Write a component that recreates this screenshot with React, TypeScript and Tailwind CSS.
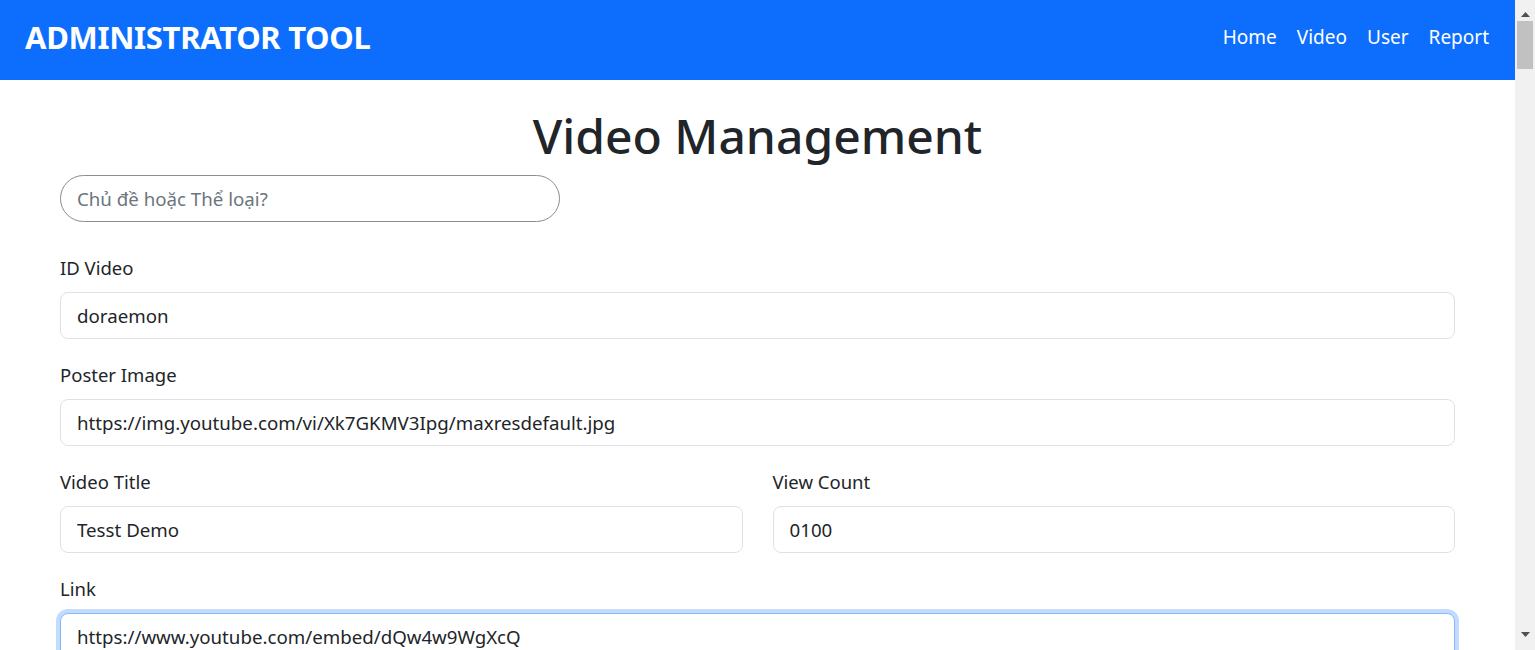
import React, { useEffect, useRef } from 'react';

const FONT = { fontFamily: '"Noto Sans", "Open Sans", "DejaVu Sans", sans-serif' };

const Field = ({ label, value, className = '' }: { label: string; value: string; className?: string }) => (
  <div className={className}>
    <label className="block text-[18.5px] leading-[30px] mb-[9px]">{label}</label>
    <input
      readOnly
      value={value}
      className="w-full h-[47px] px-4 text-[18.7px] text-[#212529] bg-white border border-[#dee2e6] rounded-lg outline-none"
    />
  </div>
);

export default function App() {
  const linkRef = useRef<HTMLInputElement>(null);

  useEffect(() => {
    const el = linkRef.current;
    if (el) {
      el.focus({ preventScroll: true });
      el.setSelectionRange(el.value.length, el.value.length);
    }
  }, []);

  return (
    <div style={FONT} className="h-screen flex bg-white text-[#212529] overflow-hidden">
      <div className="flex-1 min-w-0">
        {/* Navbar */}
        <nav className="h-20 bg-[#0d6efd] flex items-center justify-between pl-[25px] pr-[26px] pb-[5px]">
          <a className="text-white font-bold text-[31px] tracking-[-0.01em]">ADMINISTRATOR TOOL</a>
          <ul className="flex items-center gap-[20px] text-white text-[19px]">
            <li>Home</li>
            <li>Video</li>
            <li>User</li>
            <li>Report</li>
          </ul>
        </nav>

        <main className="px-[60px]">
          <h1 className="text-center text-[48px] font-medium leading-[58px] mt-[27px] mb-[10px]">Video Management</h1>

          <input
            readOnly
            placeholder="Chủ đề hoặc Thể loại?"
            className="w-[500px] h-[47px] px-4 text-[18.7px] border border-[#868e96] rounded-full outline-none placeholder:text-[#6c757d]"
          />

          <div className="mt-[31px] flex flex-col gap-[21px]">
            <Field label="ID Video" value="doraemon" />
            <Field label="Poster Image" value="https://img.youtube.com/vi/Xk7GKMV3Ipg/maxresdefault.jpg" />
            <div className="grid grid-cols-2 gap-[30px]">
              <Field label="Video Title" value="Tesst Demo" />
              <Field label="View Count" value="0100" />
            </div>
            <div>
              <label className="block text-[18.5px] leading-[30px] mb-[9px]">Link</label>
              <input
                ref={linkRef}
                readOnly
                value="https://www.youtube.com/embed/dQw4w9WgXcQ"
                className="w-full h-[47px] px-4 text-[18.7px] bg-white border border-[#86b7fe] rounded-lg outline-none shadow-[0_0_0_4px_rgba(13,110,253,0.25)] caret-[#212529]"
              />
            </div>
          </div>
        </main>
      </div>

      {/* Scrollbar track */}
      <div className="w-5 shrink-0 bg-[#f1f1f1] flex flex-col items-center">
        <div className="h-[17px] flex items-end justify-center">
          <svg width="9" height="5" viewBox="0 0 9 5"><path d="M0 5 L4.5 0 L9 5 Z" fill="#505050" /></svg>
        </div>
        <div className="mt-[4px] w-[16px] h-[48px] bg-[#c1c1c1]" />
        <div className="flex-1" />
        <div className="h-[17px] flex items-start justify-center mb-[1px]">
          <svg width="9" height="5" viewBox="0 0 9 5"><path d="M0 0 L4.5 5 L9 0 Z" fill="#505050" /></svg>
        </div>
      </div>
    </div>
  );
}
